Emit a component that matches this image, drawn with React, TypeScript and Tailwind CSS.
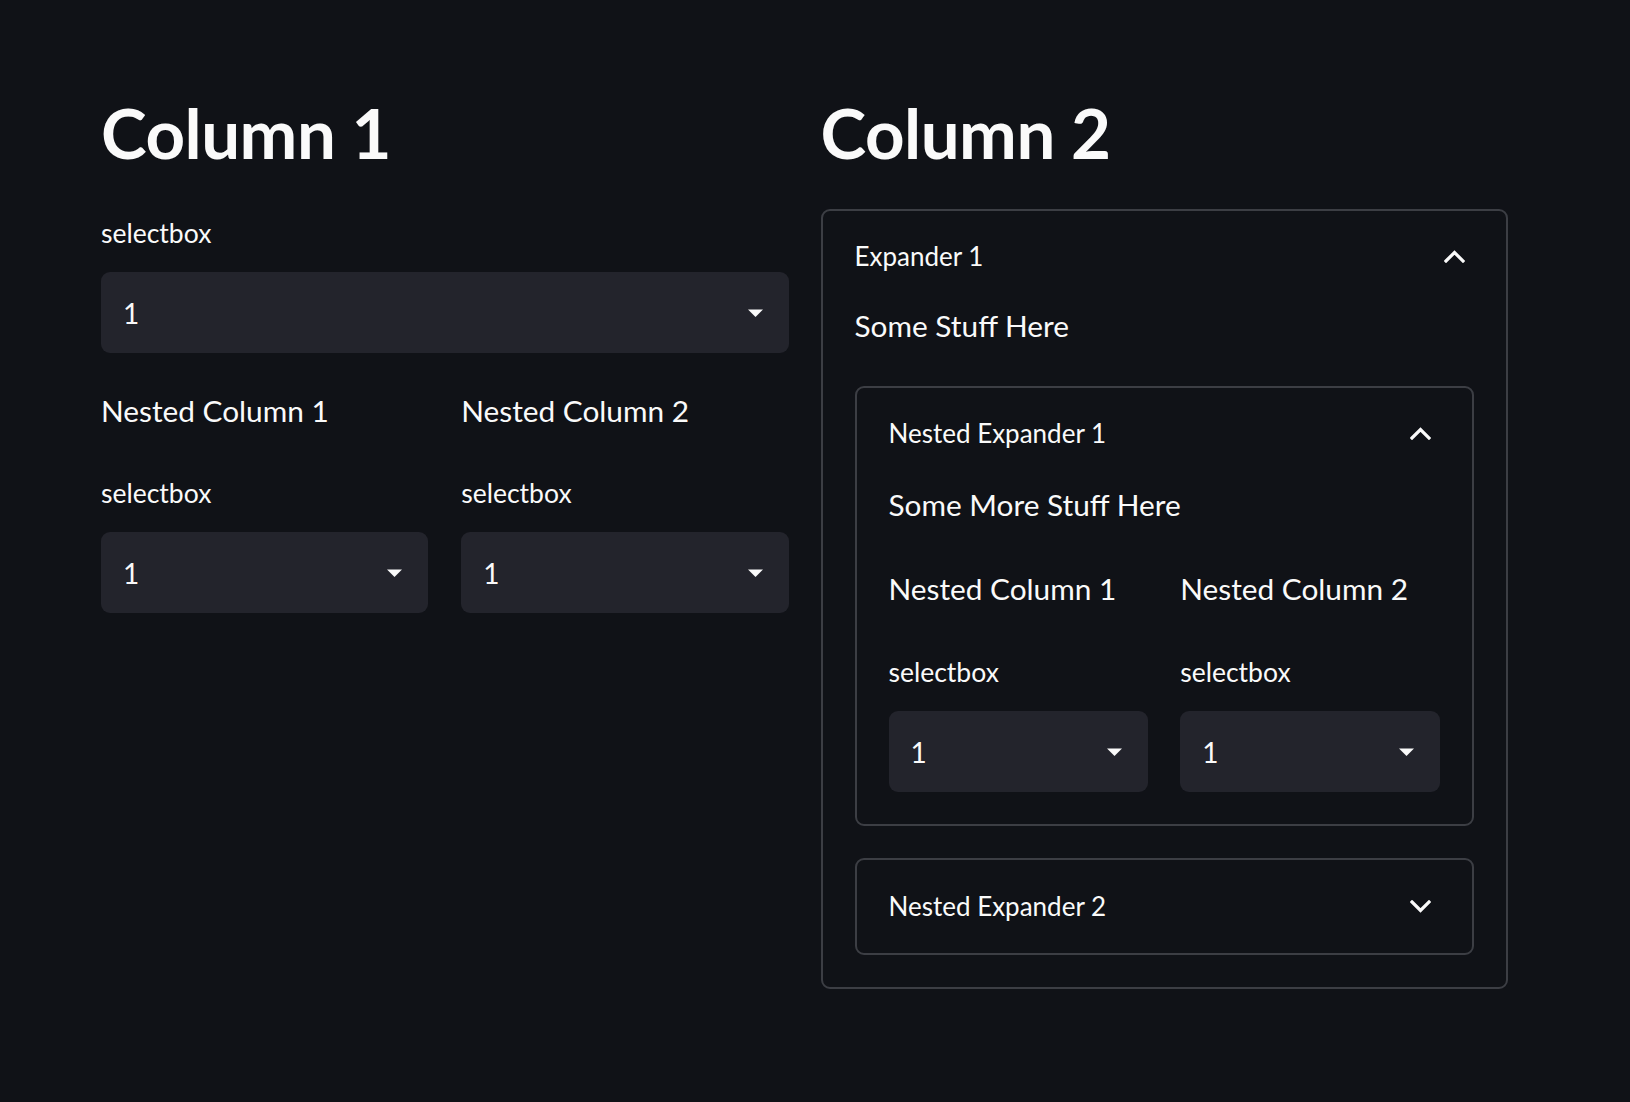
import type { ReactNode } from "react"

const font = { fontFamily: "Lato, 'Noto Sans', sans-serif" }

const Caret = () => (
  <svg width="15" height="8" viewBox="0 0 15 8" className="mr-[26px] shrink-0">
    <path d="M0 0.5 L15 0.5 L7.5 8 Z" fill="#fafafa" />
  </svg>
)

const Chevron = ({ up }: { up: boolean }) => (
  <svg width="21" height="13" viewBox="0 0 21 13" className="mr-[9px] shrink-0">
    <polyline
      points={up ? "2,11 10.5,2.5 19,11" : "2,2 10.5,10.5 19,2"}
      fill="none"
      stroke="#fafafa"
      strokeWidth="3.2"
      strokeLinecap="square"
    />
  </svg>
)

const SelectBox = ({ className = "" }: { className?: string }) => (
  <div className={className}>
    <div className="h-[40px] leading-[40px] text-[26.5px]">selectbox</div>
    <div className="mt-[19px] h-[81px] rounded-[9px] bg-[#23242c] flex items-center justify-between pl-[22px]">
      <span className="text-[28px]">1</span>
      <Caret />
    </div>
  </div>
)

const Expander = ({
  title,
  open,
  children,
  className = "",
}: {
  title: string
  open: boolean
  children?: ReactNode
  className?: string
}) => (
  <div className={`border-2 border-[#3c3e44] rounded-[9px] ${className}`}>
    <div className={`${open ? "h-[91px]" : "h-[93px]"} flex items-center justify-between pl-[32px] pr-[32px]`}>
      <span className="text-[26px]">{title}</span>
      <Chevron up={open} />
    </div>
    {open && <div className="px-[32px] pb-[32px]">{children}</div>}
  </div>
)

export default function App() {
  return (
    <div style={font} className="min-h-screen bg-[#101217] text-[#fafafa] pl-[101px] pt-[83px]">
      <div className="w-[1407px] grid grid-cols-2 gap-[32px]">
        {/* left column */}
        <div>
          <h1 className="h-[100px] leading-[100px] text-[69px] font-bold tracking-[-0.5px]">Column 1</h1>
          <SelectBox className="mt-[30px]" />
          <div className="mt-[34px] grid grid-cols-2 gap-[33px]">
            <div>
              <div className="h-[48px] leading-[48px] text-[29.8px]">Nested Column 1</div>
              <SelectBox className="mt-[38px]" />
            </div>
            <div>
              <div className="h-[48px] leading-[48px] text-[29.8px]">Nested Column 2</div>
              <SelectBox className="mt-[38px]" />
            </div>
          </div>
        </div>

        {/* right column */}
        <div>
          <h1 className="h-[100px] leading-[100px] text-[69px] font-bold tracking-[-0.5px]">Column 2</h1>
          <Expander title="Expander 1" open className="mt-[26px]">
            <div className="h-[48px] leading-[48px] text-[29.8px]">Some Stuff Here</div>
            <Expander title="Nested Expander 1" open className="mt-[36px]">
              <div className="mt-[2px] h-[48px] leading-[48px] text-[29.8px]">Some More Stuff Here</div>
              <div className="mt-[36px] grid grid-cols-2 gap-[32px]">
                <div>
                  <div className="h-[48px] leading-[48px] text-[29.8px]">Nested Column 1</div>
                  <SelectBox className="mt-[39px]" />
                </div>
                <div>
                  <div className="h-[48px] leading-[48px] text-[29.8px]">Nested Column 2</div>
                  <SelectBox className="mt-[39px]" />
                </div>
              </div>
            </Expander>
            <Expander title="Nested Expander 2" open={false} className="mt-[32px]" />
          </Expander>
        </div>
      </div>
    </div>
  )
}
